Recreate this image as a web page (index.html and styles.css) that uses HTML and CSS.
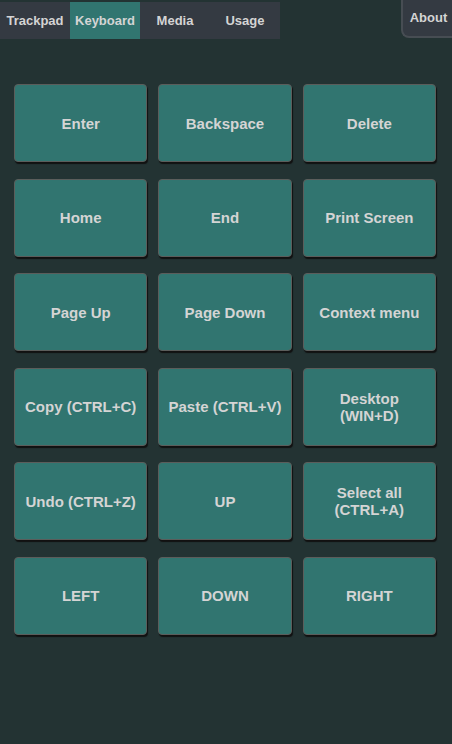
FILE: index.html
```html
<!DOCTYPE html>
<html>
<head>
<meta charset="utf-8">
<link rel="stylesheet" href="styles.css">
</head>
<body>
<header class="top">
  <nav class="tabs">
    <div class="tab">Trackpad</div>
    <div class="tab active">Keyboard</div>
    <div class="tab">Media</div>
    <div class="tab">Usage</div>
  </nav>
  <div class="about">About</div>
</header>
<main class="grid">
  <button class="key">Enter</button>
  <button class="key">Backspace</button>
  <button class="key">Delete</button>
  <button class="key">Home</button>
  <button class="key">End</button>
  <button class="key">Print Screen</button>
  <button class="key">Page Up</button>
  <button class="key">Page Down</button>
  <button class="key">Context menu</button>
  <button class="key">Copy (CTRL+C)</button>
  <button class="key">Paste (CTRL+V)</button>
  <button class="key">Desktop<br>(WIN+D)</button>
  <button class="key">Undo (CTRL+Z)</button>
  <button class="key">UP</button>
  <button class="key">Select all<br>(CTRL+A)</button>
  <button class="key">LEFT</button>
  <button class="key">DOWN</button>
  <button class="key">RIGHT</button>
</main>
</body>
</html>
```
FILE: styles.css
```css
html, body {
  margin: 0;
  padding: 0;
  background: #233333;
  font-family: "Liberation Sans", Arial, sans-serif;
  width: 452px;
  height: 744px;
  overflow: hidden;
}
.top {
  display: flex;
  justify-content: space-between;
  align-items: flex-start;
  height: 84px;
}
.tabs {
  display: flex;
  margin-top: 2px;
  background: #343a42;
  height: 37px;
}
.tab {
  width: 70px;
  display: flex;
  align-items: center;
  justify-content: center;
  color: #d4d4d4;
  font-weight: bold;
  font-size: 13px;
  padding-bottom: 1px;
  box-sizing: border-box;
}
.tab.active {
  background: #317570;
}
.about {
  width: 51px;
  height: 38px;
  box-sizing: border-box;
  background: #343a42;
  border-left: 2px solid #474d53;
  border-bottom: 2px solid #474d53;
  border-bottom-left-radius: 8px;
  color: #d4d4d4;
  font-weight: bold;
  font-size: 13px;
  display: flex;
  justify-content: center;
  padding-top: 10px;
  padding-left: 2px;
}
.grid {
  display: grid;
  grid-template-columns: repeat(3, 1fr);
  column-gap: 11px;
  row-gap: 16.6px;
  padding: 0 16px 0 14px;
}
.key {
  height: 78px;
  margin: 0;
  background: #317570;
  border: 1px solid #5b5d5b;
  border-radius: 4px;
  box-shadow: 1px 2px 1px #111;
  color: #d4d4d4;
  font-family: "Liberation Sans", Arial, sans-serif;
  font-weight: bold;
  font-size: 15px;
  line-height: 17px;
  padding: 0 4px;
}
```
